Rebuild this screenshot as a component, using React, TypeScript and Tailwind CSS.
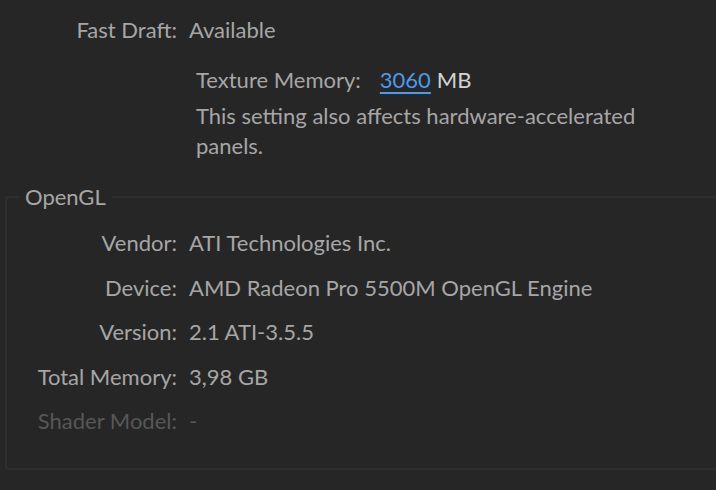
import React from "react";

const rows: { label: string; value: string; dim?: boolean }[] = [
  { label: "Vendor:", value: "ATI Technologies Inc." },
  { label: "Device:", value: "AMD Radeon Pro 5500M OpenGL Engine" },
  { label: "Version:", value: "2.1 ATI-3.5.5" },
  { label: "Total Memory:", value: "3,98 GB" },
  { label: "Shader Model:", value: "-", dim: true },
];

export default function App() {
  return (
    <div className="h-[490px] w-full overflow-hidden bg-[#262626] font-['Lato',sans-serif] text-[22px] text-[#a6a6a6]">
      <div className="flex pt-[16px] leading-[28px]">
        <span className="w-[177px] text-right">Fast Draft:</span>
        <span className="pl-[12px]">Available</span>
      </div>

      <div className="pl-[196px] pt-[22px]">
        <div className="flex items-baseline leading-[28px]">
          <span>Texture Memory:</span>
          <span className="ml-[19px] text-[#4b9bea] underline decoration-[2px] underline-offset-[4px]">3060</span>
          <span className="ml-[6px] text-[#d4d4d4]">MB</span>
        </div>
        <p className="mt-[7px] w-[470px] leading-[30px]">
          This setting also affects hardware-accelerated panels.
        </p>
      </div>

      <fieldset className="mt-[22px] ml-[5px] mr-[-12px] h-[287px] rounded-[4px] border-[2px] border-[#2f2f2f] pl-0">
        <legend className="ml-[12px] px-[6px] leading-[28px]">OpenGL</legend>
        <div className="mt-[18px] flex flex-col gap-[16.5px]">
          {rows.map((r) => (
            <div key={r.label} className={`flex leading-[28px] ${r.dim ? "text-[#575757]" : ""}`}>
              <span className="w-[170px] text-right">{r.label}</span>
              <span className="pl-[12px]">{r.value}</span>
            </div>
          ))}
        </div>
      </fieldset>
    </div>
  );
}
